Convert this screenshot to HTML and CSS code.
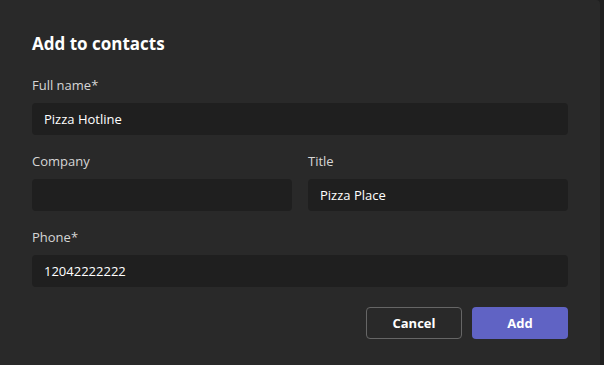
FILE: index.html
```html
<!DOCTYPE html>
<html lang="en">
<head>
    <meta charset="UTF-8">
    <title>Add to contacts</title>
    <link rel="stylesheet" href="styles.css">
</head>
<body>
    <div class="screen">
        <div class="dialog">
            <h2 class="dialog-title">Add to contacts</h2>

            <div class="field">
                <label class="field-label">Full name*</label>
                <div class="field-input">Pizza Hotline</div>
            </div>

            <div class="field-row">
                <div class="field">
                    <label class="field-label">Company</label>
                    <div class="field-input"></div>
                </div>
                <div class="field">
                    <label class="field-label">Title</label>
                    <div class="field-input">Pizza Place</div>
                </div>
            </div>

            <div class="field">
                <label class="field-label">Phone*</label>
                <div class="field-input">12042222222</div>
            </div>

            <div class="actions">
                <button class="btn btn-secondary">Cancel</button>
                <button class="btn btn-primary">Add</button>
            </div>
        </div>
        <div class="side-strip"></div>
    </div>
</body>
</html>
```

FILE: styles.css
```css
body {
    margin: 0;
    padding: 0;
    background-color: #1f1f1f;
    font-family: 'Open Sans', 'Noto Sans', sans-serif;
    color: #fff;
    overflow: hidden;
}

.screen {
    display: flex;
    width: 604px;
    height: 365px;
}

/* Dialog */
.dialog {
    width: 600px;
    height: 365px;
    box-sizing: border-box;
    padding: 32px 32px 0;
    background-color: #292929;
    border-radius: 0 4px 0 0;
}

.side-strip {
    flex: 1;
    background-color: #1f1f1f;
}

.dialog-title {
    margin: 0 0 19px;
    font-size: 17px;
    line-height: 24px;
    font-weight: 700;
}

.field {
    margin-bottom: 16px;
}

.field-label {
    display: block;
    font-size: 13px;
    line-height: 20px;
    color: #d6d6d6;
    margin-bottom: 8px;
}

.field-input {
    height: 32px;
    box-sizing: border-box;
    padding: 0 12px;
    background-color: #1f1f1f;
    border-radius: 4px;
    font-size: 13px;
    line-height: 32px;
    color: #fff;
}

.field-row {
    display: grid;
    grid-template-columns: 1fr 1fr;
    gap: 16px;
}

/* Buttons */
.actions {
    display: flex;
    justify-content: flex-end;
    gap: 10px;
    margin-top: 20px;
}

.btn {
    width: 96px;
    height: 32px;
    border-radius: 4px;
    font-family: inherit;
    font-size: 13px;
    font-weight: 700;
    color: #fff;
    cursor: pointer;
}

.btn-secondary {
    background-color: #292929;
    border: 1px solid #666;
}

.btn-primary {
    background-color: #6063c4;
    border: none;
}
```
